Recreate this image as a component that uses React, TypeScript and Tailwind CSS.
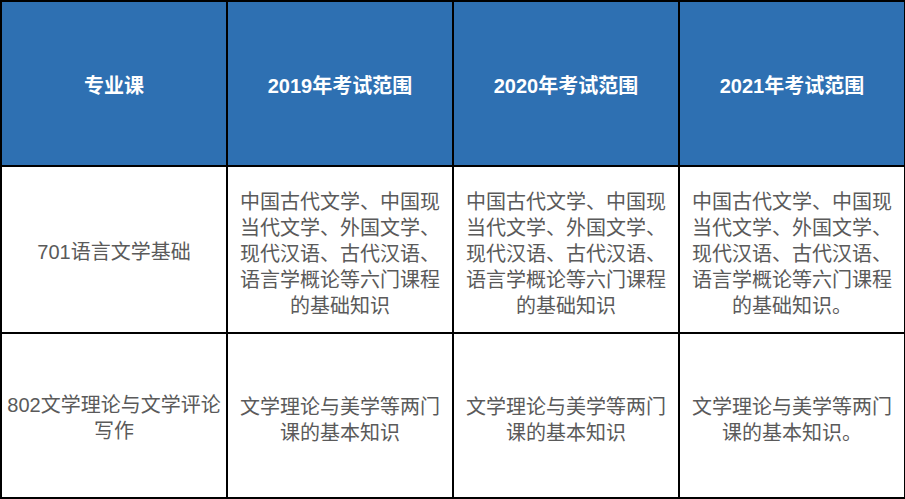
const headers = ["专业课", "2019年考试范围", "2020年考试范围", "2021年考试范围"];

const rows = [
  {
    course: "701语言文学基础",
    scopes: [
      "中国古代文学、中国现当代文学、外国文学、现代汉语、古代汉语、语言学概论等六门课程的基础知识",
      "中国古代文学、中国现当代文学、外国文学、现代汉语、古代汉语、语言学概论等六门课程的基础知识",
      "中国古代文学、中国现当代文学、外国文学、现代汉语、古代汉语、语言学概论等六门课程的基础知识。",
    ],
    height: "h-[167px]",
  },
  {
    course: "802文学理论与文学评论写作",
    scopes: [
      "文学理论与美学等两门课的基本知识",
      "文学理论与美学等两门课的基本知识",
      "文学理论与美学等两门课的基本知识。",
    ],
    height: "h-[165px]",
  },
];

export default function App() {
  return (
    <div
      className="w-[905px] h-[499px] bg-white"
      style={{ fontFamily: '"Liberation Sans", "Noto Sans CJK SC", sans-serif' }}
    >
      <table className="w-[904px] table-fixed border-collapse border-2 border-black">
        <thead>
          <tr className="h-[165px] bg-[#2e70b2]">
            {headers.map((h) => (
              <th
                key={h}
                className="w-[226px] border-2 border-black pt-1 text-center align-middle text-[20px] font-bold text-white"
              >
                {h}
              </th>
            ))}
          </tr>
        </thead>
        <tbody>
          {rows.map((row) => (
            <tr key={row.course} className={row.height}>
              <td className="border-2 border-black px-1 pt-1 text-center align-middle text-[20px] leading-[26px] text-[#5a5a5a]">
                <div className="mx-auto w-[214px]">{row.course}</div>
              </td>
              {row.scopes.map((s, i) => (
                <td
                  key={i}
                  className="border-2 border-black pt-2 text-center align-middle text-[20px] leading-[26px] text-[#5a5a5a]"
                >
                  <div className="mx-auto w-[204px]">{s}</div>
                </td>
              ))}
            </tr>
          ))}
        </tbody>
      </table>
    </div>
  );
}
